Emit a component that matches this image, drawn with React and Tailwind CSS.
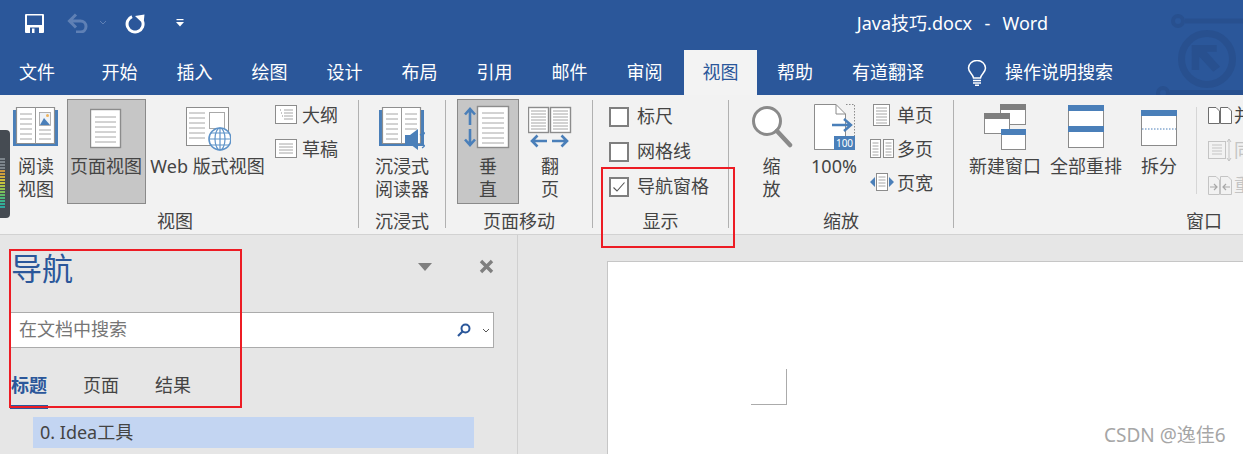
import React from "react";

const tabs = ["开始", "插入", "绘图", "设计", "布局", "引用", "邮件", "审阅"];

const levelBars = [
  "bg-[#7d858c]",
  "bg-[#7d858c]",
  "bg-[#7d858c]",
  "bg-[#7d858c]",
  "bg-[#c9973f]",
  "bg-[#cf9f3c]",
  "bg-[#cfae3c]",
  "bg-[#cdbb3c]",
  "bg-[#c4c23e]",
  "bg-[#aec245]",
  "bg-[#94c04f]",
  "bg-[#7dbd5a]",
  "bg-[#62b968]",
  "bg-[#4db67a]",
  "bg-[#3cb38a]",
  "bg-[#33ae97]",
  "bg-[#2fa8a0]",
];

const Lines = ({ x1, x2, ys, color = "#a6a6a6" }) => (
  <>
    {ys.map((y) => (
      <line key={y} x1={x1} x2={x2} y1={y} y2={y} stroke={color} strokeWidth="1" />
    ))}
  </>
);

// icon area is 55px tall, y=0 sits 100px down the page
const Icon = ({ w, children }) => (
  <svg width={w} height="55" viewBox={`0 0 ${w} 55`} className="shrink-0">
    {children}
  </svg>
);

const LargeButton = ({ className = "", w, icon, children }) => (
  <div className={`flex h-[105px] flex-col items-center border border-transparent ${className}`}>
    <Icon w={w}>{icon}</Icon>
    <div className="whitespace-nowrap text-center text-[18px] leading-[23px]">{children}</div>
  </div>
);

const SmallButton = ({ icon, label, iconW = 24, className = "h-[34px]" }) => (
  <div className={`flex items-center pb-[3px] ${className}`}>
    <div className="flex justify-center" style={{ width: iconW }}>
      {icon}
    </div>
    <span className="whitespace-nowrap text-[18px] leading-[24px]">{label}</span>
  </div>
);

const Group = ({ className = "", label, labelClass = "", children }) => (
  <div className={`flex shrink-0 flex-col ${className}`}>
    <div className="flex h-[105px]">{children}</div>
    <div className={`mt-[5px] whitespace-nowrap text-center text-[18px] leading-[24px] ${labelClass}`}>{label}</div>
  </div>
);

const Sep = () => <div className="mt-px h-[128px] w-px shrink-0 bg-[#b1b1b1]" />;

const CheckRow = ({ label, checked }) => (
  <div className="flex h-[35px] items-center">
    <div className="flex h-[20px] w-[20px] items-center justify-center border-2 border-[#7f7f7f] bg-white">
      {checked && (
        <svg width="14" height="12" viewBox="0 0 14 12">
          <path d="M1.5 6.5 L5 10 L12.5 1.5" fill="none" stroke="#555" strokeWidth="1.1" />
        </svg>
      )}
    </div>
    <span className="mb-[2px] ml-[8px] whitespace-nowrap text-[18px] leading-[24px]">{label}</span>
  </div>
);

const Book = ({ children }) => (
  <>
    <rect x="0" y="10" width="45" height="36" fill="#4a7fb9" />
    <path d="M3.5 7.5 H41.5 V43.5 H3.5 Z" fill="#fff" stroke="#8f8f8f" strokeWidth="1.2" />
    <line x1="22.5" x2="22.5" y1="7.5" y2="43.5" stroke="#9a9a9a" />
    <Lines x1={7} x2={19} ys={[14, 19, 24, 29, 34, 39]} />
    {children}
  </>
);

const NewWindowIcon = () => (
  <>
    <rect x="24.5" y="4.5" width="25" height="20" fill="#fff" stroke="#8a8a8a" />
    <rect x="24" y="4" width="26" height="6" fill="#7f7f7f" />
    <rect x="8.5" y="13.5" width="25" height="20" fill="#fff" stroke="#8a8a8a" />
    <rect x="8" y="13" width="26" height="6" fill="#7f7f7f" />
    <rect x="25.5" y="29.5" width="24" height="20" fill="#fff" stroke="#8a8a8a" />
    <rect x="25" y="29" width="25" height="6" fill="#4a7fb9" />
  </>
);

export default function App() {
  return (
    <div className="relative h-[454px] w-[1243px] overflow-hidden bg-[#e6e6e6] font-['Noto_Sans','Noto_Sans_CJK_SC',sans-serif] text-[#444]">
      {/* title bar */}
      <div className="relative h-[95px] bg-[#2b579a] text-white">
        <svg className="absolute right-0 top-0" width="90" height="95" viewBox="0 0 90 95">
          <g fill="none" stroke="#28508f">
            <circle cx="25" cy="21" r="5" strokeWidth="4" />
            <line x1="32" y1="21" x2="90" y2="21" strokeWidth="5" />
            <circle cx="54" cy="59" r="25.5" strokeWidth="7" />
            <circle cx="10" cy="93" r="5" strokeWidth="4" />
            <line x1="17" y1="92.5" x2="90" y2="92.5" strokeWidth="5" />
          </g>
          <path d="M38.7 45 H63.7 V51.7 H53.7 L67 66.7 L60.3 71.7 L46.3 56.7 V70 H38.7 Z" fill="#28508f" />
        </svg>

        <div className="relative flex h-[50px] items-center pb-[4px]">
          <svg className="ml-[25px]" width="19" height="19" viewBox="0 0 19 19">
            <path d="M1 0 H18 A1 1 0 0 1 19 1 V18 A1 1 0 0 1 18 19 H1 A1 1 0 0 1 0 18 V1 A1 1 0 0 1 1 0 Z" fill="#fff" />
            <rect x="2" y="1.5" width="15" height="9.5" fill="#2b579a" />
            <rect x="5" y="13.5" width="9" height="5.5" fill="#2b579a" />
            <rect x="7" y="14.5" width="2.5" height="4.5" fill="#fff" />
          </svg>
          <svg className="ml-[23px]" width="22" height="20" viewBox="0 0 22 20">
            <path d="M3 8 H13.5 A5.5 5.5 0 0 1 13.5 19 H9 M9 1.5 L2.5 8 L9 14.5" fill="none" stroke="#5f80b5" strokeWidth="3" />
          </svg>
          <svg className="ml-[10px]" width="8" height="6" viewBox="0 0 8 6">
            <path d="M1 1 L4 4 L7 1" fill="none" stroke="#5f80b5" />
          </svg>
          <svg className="ml-[18px]" width="21" height="21" viewBox="0 0 21 21">
            <path d="M7 3.6 A8 8 0 1 0 17.5 8" fill="none" stroke="#fff" strokeWidth="3" />
            <path d="M10 3 L19.5 1.5 L18.5 11 Z" fill="#fff" />
          </svg>
          <svg className="ml-[30px]" width="8" height="8" viewBox="0 0 8 8">
            <rect x="0.5" y="0" width="7" height="1.2" fill="#fff" />
            <path d="M0 3 H8 L4 7.5 Z" fill="#fff" />
          </svg>
          <span className="ml-auto mr-[195px] whitespace-pre text-[18px] leading-[24px] [word-spacing:1.5px]">Java技巧.docx  -  Word</span>
        </div>

        <div className="relative flex h-[45px] items-center text-[18px]">
          <div className="w-[74px] text-center">文件</div>
          <div className="ml-[8px] flex">
            {tabs.map((t) => (
              <div key={t} className="w-[75px] text-center">
                {t}
              </div>
            ))}
          </div>
          <div className="ml-[2px] flex h-[45px] w-[73px] items-center justify-center bg-[#f3f3f3] text-[#2b579a]">视图</div>
          <div className="w-[76px] text-center">帮助</div>
          <div className="ml-[19px] whitespace-nowrap">有道翻译</div>
          <svg className="ml-[43px]" width="20" height="26" viewBox="0 0 20 26">
            <path d="M6.5 18 C6 14 1.5 12.5 1.5 8 A8.5 7.5 0 0 1 18.5 8 C18.5 12.5 14 14 13.5 18 Z" fill="none" stroke="#fff" strokeWidth="1.5" />
            <path d="M6 20.5 H14 M6 23 H14 M8 25.3 H12" stroke="#fff" strokeWidth="1.4" />
          </svg>
          <span className="ml-[18px] whitespace-nowrap">操作说明搜索</span>
        </div>
      </div>

      {/* ribbon */}
      <div className="flex h-[140px] overflow-hidden border-b border-[#d2d2d2] bg-[#f2f2f2] pt-[4px]">
        <Group className="w-[358px]" label="视图" labelClass="pr-[8px]">
          <LargeButton
            className="ml-[13px] w-[46px]"
            w={46}
            icon={
              <Book>
                <Lines x1={26} x2={38} ys={[30, 34, 39]} />
                <rect x="26.5" y="12.5" width="11" height="13" fill="#eef2f7" stroke="#9f9f9f" strokeWidth="0.8" />
                <circle cx="34.5" cy="15.5" r="1.5" fill="#eeb25d" />
                <path d="M27 25 L31 18 L37 25 Z" fill="#4a7fb9" />
              </Book>
            }
          >
            阅读
            <br />
            视图
          </LargeButton>
          <LargeButton
            className="ml-[8px] w-[79px] !border-[#8a8a8a] bg-[#c6c6c6] pr-px"
            w={33}
            icon={
              <>
                <rect x="0.5" y="9.5" width="30" height="38" fill="#fff" stroke="#8c8c8c" strokeWidth="1.4" />
                <Lines x1={5} x2={26} ys={[17, 22, 27, 32, 37, 42]} />
              </>
            }
          >
            页面视图
          </LargeButton>
          <LargeButton
            className="ml-[3px] w-[117px]"
            w={46}
            icon={
              <>
                <rect x="1.5" y="7.5" width="42" height="38" fill="#fff" stroke="#8c8c8c" />
                <Lines x1={4} x2={20} ys={[13, 18, 23, 28, 33, 38]} />
                <rect x="24.5" y="12.5" width="15" height="16" fill="#fff" stroke="#a8a8a8" />
                <circle cx="35" cy="39" r="11" fill="#fff" stroke="#5f93c8" strokeWidth="1.6" />
                <ellipse cx="35" cy="39" rx="5" ry="11" fill="none" stroke="#5f93c8" strokeWidth="1.2" />
                <path d="M24 39 H46 M26 33 H44 M26 45 H44 M35 28 V50" stroke="#5f93c8" strokeWidth="1.2" />
              </>
            }
          >
            Web 版式视图
          </LargeButton>
          <div className="ml-[9px] flex flex-col">
            <SmallButton
              iconW={27}
              icon={
                <svg width="22" height="19" viewBox="0 0 22 19" className="-ml-[5px]">
                  <rect x="0.5" y="0.5" width="21" height="18" fill="#fff" stroke="#8c8c8c" />
                  <Lines x1={9} x2={18} ys={[5, 8, 11, 14]} />
                  <path d="M5 5 H7 M6 8 H8 M7 11 H9" stroke="#8c8c8c" strokeDasharray="1 1" />
                </svg>
              }
              label="大纲"
            />
            <SmallButton
              iconW={27}
              icon={
                <svg width="22" height="19" viewBox="0 0 22 19" className="-ml-[5px]">
                  <rect x="0.5" y="0.5" width="21" height="18" fill="#fff" stroke="#8c8c8c" />
                  <Lines x1={4} x2={18} ys={[5, 8, 11, 14]} />
                </svg>
              }
              label="草稿"
            />
          </div>
        </Group>
        <Sep />

        <Group className="w-[86px]" label="沉浸式">
          <LargeButton
            className="w-full"
            w={46}
            icon={
              <>
                <Book>
                  <Lines x1={26} x2={38} ys={[14, 19, 24, 29]} />
                </Book>
                <path d="M26 35 H31 L39 29 V50 L31 44 H26 Z" fill="#4a7fb9" />
                <path d="M41 34 A7 7 0 0 1 41 45 M43 31 A10 10 0 0 1 43 48" fill="none" stroke="#4a7fb9" strokeWidth="1.1" />
              </>
            }
          >
            沉浸式
            <br />
            阅读器
          </LargeButton>
        </Group>
        <Sep />

        <Group className="w-[146px]" label="页面移动">
          <LargeButton
            className="ml-[11px] w-[62px] !border-[#8a8a8a] bg-[#c6c6c6]"
            w={48}
            icon={
              <>
                <path d="M6 9 V25 M1 14.5 L6 9 L11 14.5" fill="none" stroke="#4a7fb9" strokeWidth="2.6" />
                <path d="M6 29 V45 M1 39.5 L6 45 L11 39.5" fill="none" stroke="#4a7fb9" strokeWidth="2.6" />
                <rect x="13.5" y="6.5" width="31" height="41" fill="#fff" stroke="#8c8c8c" strokeWidth="1.4" />
                <Lines x1={18} x2={40} ys={[13, 18, 23, 28, 33, 38, 43]} />
              </>
            }
          >
            垂
            <br />
            直
          </LargeButton>
          <LargeButton
            className="ml-[9px] w-[44px]"
            w={44}
            icon={
              <>
                <rect x="0.5" y="7.5" width="20" height="25" fill="#fff" stroke="#8c8c8c" strokeWidth="1.4" />
                <rect x="22.5" y="7.5" width="20" height="25" fill="#fff" stroke="#8c8c8c" strokeWidth="1.4" />
                <Lines x1={3} x2={18} ys={[11, 14, 17, 20, 23, 26, 29]} />
                <Lines x1={25} x2={40} ys={[11, 14, 17, 20, 23, 26, 29]} />
                <path d="M19 41 H4 M9.5 35.5 L4 41 L9.5 46.5 M24 41 H39 M33.5 35.5 L39 41 L33.5 46.5" fill="none" stroke="#4a7fb9" strokeWidth="2.6" />
              </>
            }
          >
            翻
            <br />
            页
          </LargeButton>
        </Group>
        <Sep />

        <Group className="w-[135px]" label="显示">
          <div className="ml-[16px] flex flex-col">
            <CheckRow label="标尺" />
            <CheckRow label="网格线" />
            <CheckRow label="导航窗格" checked />
          </div>
        </Group>
        <Sep />

        <Group className="w-[224px]" label="缩放">
          <LargeButton
            className="ml-[20px] w-[45px]"
            w={42}
            icon={
              <>
                <circle cx="16" cy="21" r="13.5" fill="#fff" stroke="#8a8a8a" strokeWidth="3" />
                <path d="M26 31 L39 45" stroke="#8a8a8a" strokeWidth="4.5" strokeLinecap="round" />
              </>
            }
          >
            缩
            <br />
            放
          </LargeButton>
          <LargeButton
            className="ml-[14px] w-[52px]"
            w={44}
            icon={
              <>
                <path d="M2.5 4.5 H24 L33.5 14 V49.5 H2.5 Z" fill="#fff" stroke="#8c8c8c" />
                <path d="M24 4.5 V14 H33.5" fill="none" stroke="#8c8c8c" />
                <path d="M34 4.5 H42.5 V38 M2.5 49.5 H16" fill="none" stroke="#8c8c8c" strokeDasharray="1.5 1.5" />
                <path d="M20 25 H38 M32 19 L39 25 L32 31" fill="none" stroke="#4a7fb9" strokeWidth="2.4" />
                <rect x="22" y="36" width="21" height="14" fill="#4a7fb9" />
                <text x="32.5" y="47" fontSize="10" fill="#fff" textAnchor="middle">100</text>
              </>
            }
          >
            100%
          </LargeButton>
          <div className="ml-[9px] flex flex-col">
            <SmallButton
              iconW={28}
              icon={
                <svg width="17" height="22" viewBox="0 0 17 22" className="-ml-[3px]">
                  <rect x="0.5" y="0.5" width="16" height="21" fill="#fff" stroke="#8c8c8c" />
                  <Lines x1={3} x2={14} ys={[4, 7, 10, 13, 16, 19]} />
                </svg>
              }
              label="单页"
            />
            <SmallButton
              iconW={28}
              icon={
                <svg width="24" height="19" viewBox="0 0 24 19" className="-ml-[3px]">
                  <rect x="0.5" y="0.5" width="10" height="18" fill="#fff" stroke="#8c8c8c" />
                  <rect x="13.5" y="0.5" width="10" height="18" fill="#fff" stroke="#8c8c8c" />
                  <Lines x1={2.5} x2={8.5} ys={[4, 7, 10, 13, 16]} />
                  <Lines x1={15.5} x2={21.5} ys={[4, 7, 10, 13, 16]} />
                </svg>
              }
              label="多页"
            />
            <SmallButton
              iconW={28}
              icon={
                <svg width="24" height="19" viewBox="0 0 24 19" className="-ml-[3px]">
                  <rect x="6.5" y="0.5" width="11" height="17" fill="#fff" stroke="#8c8c8c" />
                  <Lines x1={8.5} x2={15.5} ys={[4, 7, 10, 13]} />
                  <path d="M5 4 V14 L0 9 Z M19 4 V14 L24 9 Z" fill="#4a7fb9" />
                </svg>
              }
              label="页宽"
            />
          </div>
        </Group>
        <Sep />

        <Group className="w-[500px]" label="窗口">
          <LargeButton
            className="ml-[14px] w-[74px]"
            w={58}
            icon={<NewWindowIcon />}
          >
            新建窗口
          </LargeButton>
          <LargeButton
            className="ml-[7px] w-[74px]"
            w={38}
            icon={
              <>
                <rect x="1.5" y="5.5" width="35" height="42" fill="#fff" stroke="#8a8a8a" />
                <rect x="1" y="5" width="36" height="6" fill="#4a7fb9" />
                <rect x="1" y="26" width="36" height="6" fill="#4a7fb9" />
              </>
            }
          >
            全部重排
          </LargeButton>
          <LargeButton
            className="ml-[17px] w-[38px]"
            w={38}
            icon={
              <>
                <rect x="1.5" y="10.5" width="35" height="35" fill="#fff" stroke="#8a8a8a" />
                <rect x="1" y="10" width="36" height="6" fill="#4a7fb9" />
                <line x1="2" x2="36" y1="29" y2="29" stroke="#4a7fb9" strokeDasharray="1.5 1.5" />
              </>
            }
          >
            拆分
          </LargeButton>
          <div className="ml-[18px] mt-[8px] h-[87px] w-px bg-[#d6d6d6]" />
          <div className="ml-[9px] flex flex-col">
            <SmallButton
              iconW={28}
              className="h-[35px]"
              icon={
                <svg width="24" height="17" viewBox="0 0 24 17">
                  <path d="M0.5 0.5 H8 L11.5 4 V16.5 H0.5 Z M12.5 0.5 H20 L23.5 4 V16.5 H12.5 Z" fill="#fff" stroke="#6e6e6e" />
                </svg>
              }
              label="并排查看"
            />
            <SmallButton
              iconW={28}
              className="h-[35px] text-[#c4c4c4]"
              icon={
                <svg width="24" height="24" viewBox="0 0 24 24">
                  <rect x="0.5" y="3.5" width="17" height="17" fill="#f2f2f2" stroke="#c4c4c4" />
                  <Lines x1={4} x2={14} ys={[7, 10, 13, 16]} color="#c4c4c4" />
                  <path d="M21 1 V23 M19 4 L21 1 L23 4 M19 20 L21 23 L23 20" fill="none" stroke="#c4c4c4" />
                </svg>
              }
              label="同步滚动"
            />
            <SmallButton
              iconW={28}
              className="h-[35px] text-[#c4c4c4]"
              icon={
                <svg width="24" height="19" viewBox="0 0 24 19">
                  <path d="M0.5 0.5 H8 L11.5 4 V18.5 H0.5 Z M12.5 0.5 H20 L23.5 4 V18.5 H12.5 Z" fill="#f2f2f2" stroke="#c4c4c4" />
                  <path d="M2 11 H9 M6 8 L9 11 L6 14 M22 11 H15 M18 8 L15 11 L18 14" fill="none" stroke="#a8a8a8" strokeWidth="1.2" />
                </svg>
              }
              label="重设窗口位置"
            />
          </div>
        </Group>
      </div>

      {/* body */}
      <div className="flex h-[219px]">
        <div className="w-[518px] shrink-0 border-r border-[#d0d0d0] pl-[10px]">
          <div className="flex h-[77px] items-start">
            <div className="ml-px mt-[11px] text-[31px] leading-[44px] text-[#2b579a]">导航</div>
            <svg className="ml-[345px] mt-[28px]" width="14" height="8" viewBox="0 0 14 8">
              <path d="M0 0 H14 L7 8 Z" fill="#7f7f7f" />
            </svg>
            <svg className="ml-[47px] mt-[24px]" width="15" height="15" viewBox="0 0 15 15">
              <path d="M2 2 L13 13 M13 2 L2 13" stroke="#7f7f7f" strokeWidth="3.4" />
            </svg>
          </div>
          <div className="flex h-[36px] w-[484px] items-center border border-[#ababab] bg-white">
            <span className="mb-[2px] ml-[8px] text-[18px] leading-[24px] text-[#767676]">在文档中搜索</span>
            <svg className="ml-auto" width="14" height="14" viewBox="0 0 14 14">
              <circle cx="8.5" cy="5.5" r="4" fill="none" stroke="#2b579a" strokeWidth="2" />
              <path d="M5.5 8.5 L1 13" stroke="#2b579a" strokeWidth="2.2" />
            </svg>
            <svg className="ml-[11px] mr-[3px]" width="8" height="5" viewBox="0 0 8 5">
              <path d="M1 1 L4 4 L7 1" fill="none" stroke="#555" />
            </svg>
          </div>
          <div className="mt-[24px] flex h-[37px] text-[18px] leading-[26px]">
            <div className="w-[38px] border-b-[4px] border-[#2b579a] pl-px font-bold text-[#2b579a]">标题</div>
            <div className="ml-[35px]">页面</div>
            <div className="ml-[36px]">结果</div>
          </div>
          <div className="ml-[23px] mt-[8px] h-[31px] w-[441px] bg-[#c3d5f2] pl-[7px] text-[18px] leading-[31px]">0. Idea工具</div>
        </div>

        <div className="ml-[89px] mt-[26px] flex-1 border-l border-t border-[#c6c6c6] bg-white pl-[143px] pt-[107px]">
          <div className="h-[36px] w-[36px] border-b border-r border-[#ababab]" />
        </div>
      </div>

      {/* floating bits that lie over the window */}
      <div className="absolute left-0 top-[130px] flex h-[88px] w-[10px] flex-col justify-end gap-px rounded-r-[4px] bg-[#454b52] pb-[10px]">
        {levelBars.map((c, i) => (
          <div key={i} className={`h-[2px] w-[5px] ${c}`} />
        ))}
      </div>
      <div className="absolute left-[601px] top-[167px] h-[81px] w-[134px] border-2 border-[#ed1c24]" />
      <div className="absolute left-[9px] top-[249px] h-[159px] w-[233px] border-2 border-[#ed1c24]" />
      <div className="absolute left-[1104px] top-[424px] text-[19px] leading-[22px] text-[#a6a6a6]">CSDN @逸佳6</div>
    </div>
  );
}
